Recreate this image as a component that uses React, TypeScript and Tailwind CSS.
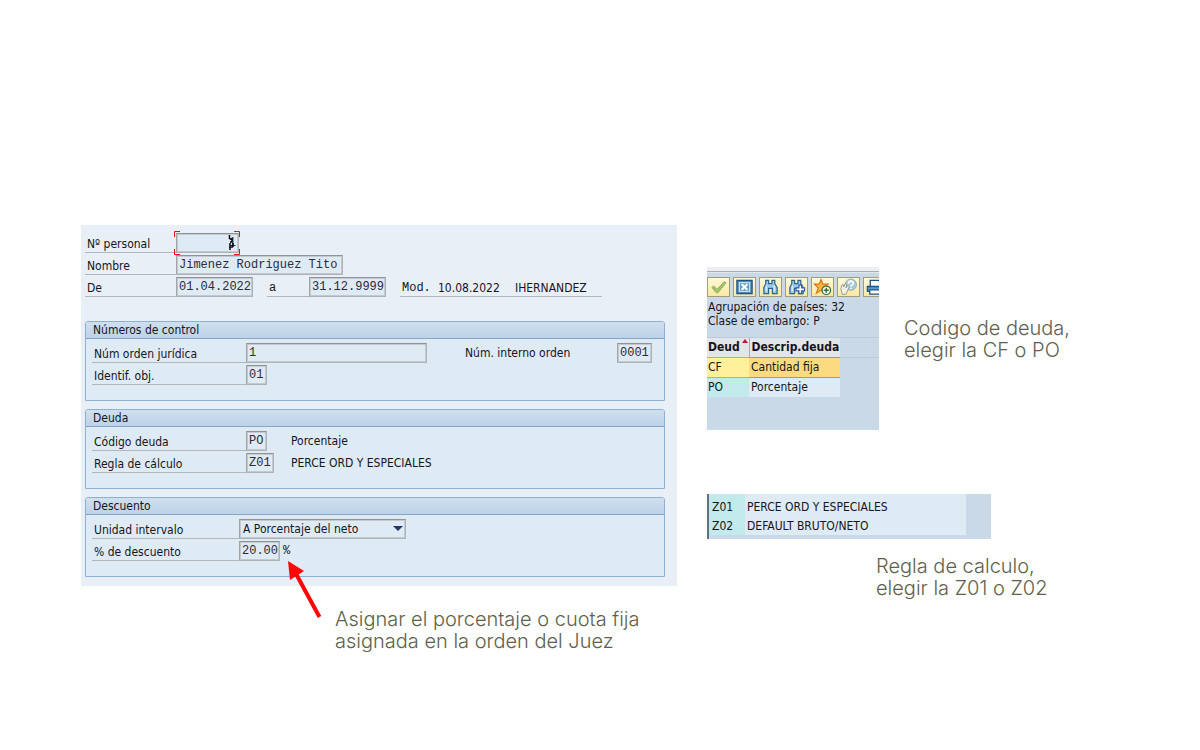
import type { ReactNode } from 'react';

const fieldBorder =
  'border border-t-[#8f9497] border-l-[#a2a6a9] border-r-[#aeb2b4] border-b-[#aeb2b4] shadow-[inset_0_0_0_1px_#c3c9ce]';

const fieldBase = `h-5 ${fieldBorder} bg-[#deeaf4] font-["Liberation_Mono",monospace] text-[12px] leading-[18px] text-[#2b2b3a] outline-none`;

const underline = 'h-5 border-b border-[#b4b7ba] leading-[22px]';

type FieldProps = { id: string; value: string; width: string };

function Field({ id, value, width }: FieldProps) {
  return <input id={id} defaultValue={value} className={`${fieldBase} ${width} shrink-0 pl-[2px]`} />;
}

function Group({ title, children }: { title: string; children: ReactNode }) {
  return (
    <section className="rounded-t-[3px] border border-[#8fb0d0] bg-[#deeaf4] pb-[15px]">
      <h2 className="h-[17px] rounded-t-[2px] border-b border-[#85a5c8] bg-linear-to-b from-[#cfdfee] to-[#bdd3e8] pl-[7px] leading-4">
        {title}
      </h2>
      <div className="flex flex-col gap-[2px] pt-1 pl-[6px]">{children}</div>
    </section>
  );
}

type RowProps = { htmlFor: string; label: string; width?: string; children: ReactNode };

function Row({ htmlFor, label, width = 'w-[154px]', children }: RowProps) {
  return (
    <div className="flex h-5 items-center">
      <label htmlFor={htmlFor} className={`${underline} ${width} shrink-0 pl-[2px]`}>
        {label}
      </label>
      {children}
    </div>
  );
}

function Binoculars() {
  return (
    <g fill="#9fcbe8" stroke="#2a648f" strokeWidth="1.3">
      <path d="M4.500 6V2.500h3V6H11V2.500h3V6l2.500 4v6.500h-5V11H7.500v5.500h-5V10z" />
      <path d="M5 8v6M13.500 8v6" stroke="#e6f4fc" strokeWidth="1.2" />
    </g>
  );
}

const tools: { name: string; icon: ReactNode }[] = [
  {
    name: 'Aceptar',
    icon: <path d="M2.500 10l2-1.500L8 12l7.500-8 2 1L9 15.500H7z" fill="#a3c468" stroke="#93ad64" />,
  },
  {
    name: 'Cancelar',
    icon: (
      <g>
        <rect x="1.500" y="2.500" width="16" height="14" fill="#4d8fbe" stroke="#1e5580" strokeWidth="1.4" />
        <rect x="4" y="5" width="11" height="9" fill="#5c9dca" stroke="#e9f5fc" />
        <path d="M6.500 6.500l6 6M12.500 6.500l-6 6" stroke="#fff" strokeWidth="2.2" />
      </g>
    ),
  },
  { name: 'Buscar', icon: <Binoculars /> },
  {
    name: 'Buscar siguiente',
    icon: (
      <g>
        <Binoculars />
        <path d="M12 7.500h3v3h3v3h-3v3h-3v-3H9v-3h3z" fill="#fff" stroke="#2c5fa8" strokeWidth="1.3" />
      </g>
    ),
  },
  {
    name: 'Favoritos',
    icon: (
      <g>
        <path d="M8 1.500l2 5h5.500l-4.500 4 1.500 5.500L8 13l-5 3 2-5.500-4-4h5z" fill="#f9b93c" stroke="#dc7117" strokeWidth="1.2" />
        <circle cx="13.500" cy="13" r="4.500" fill="#fff" stroke="#3f6f3c" strokeWidth="1.4" />
        <path d="M13.500 10.300v5.400M10.800 13h5.400" stroke="#2f7a35" strokeWidth="1.7" />
      </g>
    ),
  },
  {
    name: 'Ayuda',
    icon: (
      <g fill="none" stroke="#8f9a98">
        <circle cx="12" cy="7" r="6" fill="#a9cbdc" stroke="#93afb9" />
        <path d="M9.500 6c0-3.500 5-3.500 5-.5 0 2-2.500 1.500-2.500 3.500M12 10.200v1.400" stroke="#fff" strokeWidth="1.7" />
        <path d="M3 17.500l-1.500-6 1-4 1.200-1 .8 3 2-4 1.200 1-1 4 2.600-3 1.200 1L7 17z" fill="#f3f1e4" />
      </g>
    ),
  },
  {
    name: 'Imprimir',
    icon: (
      <g stroke="#1e5580" strokeWidth="1.4">
        <path d="M5 9V2.500h9L17 5v4" fill="#fff" />
        <path d="M2 9h16v5H2z" fill="#5b9cc8" />
        <path d="M4.500 12.500h11V17h-11z" fill="#fff" />
      </g>
    ),
  },
];

function CodePopup() {
  return (
    <section className="h-[163px] w-[172px] shrink-0 overflow-hidden bg-[#cad9e8]">
      <div className="h-1 bg-[#eceef0]" />
      <div className="mb-1 h-[2px] border-t border-[#a9adb1] bg-[#e2e7ec]" />
      <div className="flex gap-[3px]">
        {tools.map((tool) => (
          <button
            key={tool.name}
            type="button"
            aria-label={tool.name}
            className="flex h-5 w-[23px] shrink-0 items-center justify-center border border-[#a39c7b] bg-linear-to-b from-[#fff9d8] to-[#fbe8a2]"
          >
            <svg viewBox="0 0 19 19" className="h-[18px] w-[19px]" fill="none">
              {tool.icon}
            </svg>
          </button>
        ))}
      </div>
      <div className="mt-[3px] pb-[9px] pl-px leading-[14px]">
        <p>Agrupación de países: 32</p>
        <p>Clase de embargo: P</p>
      </div>
      <div className="relative border-t border-[#bccbdc]">
        <div className="pointer-events-none absolute top-[19px] right-0 w-[39px] border-t border-[#bccbdc]" />
        <table className="w-[133px] table-fixed border-collapse text-left">
          <thead>
            <tr className="h-[19px] bg-[#e3e6e9]">
              <th className="relative w-[42px] border-r border-[#a9adb1] p-0 pl-px leading-[19px]">
                Deud
                <svg viewBox="0 0 6 4" className="absolute top-px right-px h-1 w-[6px]">
                  <path d="M0 4L3 0l3 4z" fill="#c4122f" />
                </svg>
              </th>
              <th className="p-0 pl-[2px] leading-[19px]">Descrip.deuda</th>
            </tr>
          </thead>
          <tbody>
            <tr className="h-5 bg-[#fcda80]">
              <td className="border-y border-[#d9a566] bg-[#fff09c] p-0 pl-px leading-[19px]">CF</td>
              <td className="border-y border-[#dc8b3a] p-0 pl-[2px] leading-[19px]">Cantidad fija</td>
            </tr>
            <tr className="h-[19px] bg-[#deeaf4]">
              <td className="bg-[#c3eaea] p-0 pl-px leading-[19px]">PO</td>
              <td className="p-0 pl-[2px] leading-[19px]">Porcentaje</td>
            </tr>
          </tbody>
        </table>
      </div>
    </section>
  );
}

function RulePopup() {
  const rules = [
    ['Z01', 'PERCE ORD Y ESPECIALES'],
    ['Z02', 'DEFAULT BRUTO/NETO'],
  ];
  return (
    <section className="w-full max-w-[284px] border-l-2 border-[#5f7088] bg-[#cad9e8] pb-1">
      <table className="w-[257px] table-fixed border-collapse">
        <tbody>
          {rules.map(([code, text]) => (
            <tr key={code} className="h-[19px] bg-[#deeaf4] align-bottom first:h-[22px]">
              <td className="w-9 bg-[#c3eaea] p-0 pl-[3px] leading-[18px]">{code}</td>
              <td className="p-0 pl-[2px] leading-[18px]">{text}</td>
            </tr>
          ))}
        </tbody>
      </table>
    </section>
  );
}

const caption = 'font-["Inter",sans-serif] text-[20px] leading-[22px] font-light text-[#5f614d]';

export default function App() {
  return (
    <main className='grid grid-cols-[minmax(0,596px)_minmax(0,1fr)] items-start gap-[30px] bg-white pt-[225px] pl-[81px] font-["DejaVu_Sans_Condensed","Noto_Sans",sans-serif] text-[12px] text-[#15151d]'>
      <div className="relative">
        <form className="flex flex-col gap-2 bg-[#e8eff6] pt-2 pr-3 pb-[9px] pl-1">
          <div className="mb-4 flex flex-col gap-[2px]">
            <div className="flex h-5 items-center">
              <label htmlFor="personal" className={`${underline} w-[91px] pl-[2px]`}>
                Nº personal
              </label>
              <div className="relative">
                <input id="personal" defaultValue="1" className={`${fieldBase} block w-[63px] pr-[2px] text-right`} />
                <svg viewBox="0 0 67 24" className="pointer-events-none absolute -top-[2px] -left-[2px] h-6 w-[67px]" fill="none">
                  <path d="M.5 6V.5H6M60 .5h5.500V6M65.500 18v5.500H60M6 23.500H.5V18" stroke="#f00d0d" />
                  <path d="M55.500 4v4M56 8h2v3h-2M56 12v3M59 12v4M55 16h4M56 16v3" stroke="#090912" strokeWidth="1.500" />
                </svg>
              </div>
            </div>
            <Row htmlFor="nombre" label="Nombre" width="w-[91px]">
              <Field id="nombre" value="Jimenez Rodriguez Tito" width="w-[167px]" />
            </Row>
            <Row htmlFor="desde" label="De" width="w-[91px]">
              <Field id="desde" value="01.04.2022" width="w-[77px]" />
              <label htmlFor="hasta" className={`${underline} ml-[14px] w-[42px] pl-[2px] font-["Liberation_Mono",monospace]`}>
                a
              </label>
              <Field id="hasta" value="31.12.9999" width="w-[77px]" />
              <p className={`${underline} ml-[14px] flex w-[202px] pl-[2px]`}>
                <span className='w-9 font-["Liberation_Mono",monospace]'>Mod.</span>
                <span className="w-[77px]">10.08.2022</span>
                <span>IHERNANDEZ</span>
              </p>
            </Row>
          </div>
          <Group title="Números de control">
            <Row htmlFor="orden" label="Núm orden jurídica">
              <Field id="orden" value="1" width="w-[181px]" />
              <label htmlFor="interno" className="ml-[38px] w-[152px] leading-[22px]">
                Núm. interno orden
              </label>
              <Field id="interno" value="0001" width="w-[35px]" />
            </Row>
            <Row htmlFor="objeto" label="Identif. obj.">
              <Field id="objeto" value="01" width="w-[21px]" />
            </Row>
          </Group>
          <Group title="Deuda">
            <Row htmlFor="codigo" label="Código deuda">
              <Field id="codigo" value="PO" width="w-[21px]" />
              <span className="ml-6 leading-[22px]">Porcentaje</span>
            </Row>
            <Row htmlFor="regla" label="Regla de cálculo">
              <Field id="regla" value="Z01" width="w-7" />
              <span className="ml-[17px] leading-[22px]">PERCE ORD Y ESPECIALES</span>
            </Row>
          </Group>
          <Group title="Descuento">
            <Row htmlFor="unidad" label="Unidad intervalo" width="w-[147px]">
              <div className="relative">
                <select
                  id="unidad"
                  className={`block h-5 w-[167px] appearance-none ${fieldBorder} bg-[#deeaf4] pl-[3px] font-["DejaVu_Sans_Condensed","Noto_Sans",sans-serif] text-[12px] leading-[18px] outline-none`}
                >
                  <option>A Porcentaje del neto</option>
                </select>
                <svg viewBox="0 0 10 5" className="pointer-events-none absolute top-[7px] right-[3px] h-[5px] w-[10px]">
                  <path d="M0 0h10L5 5z" fill="#26376b" />
                </svg>
              </div>
            </Row>
            <Row htmlFor="porcentaje" label="% de descuento" width="w-[147px]">
              <Field id="porcentaje" value="20.00" width="w-[41px]" />
              <span className='ml-[3px] font-["Liberation_Mono",monospace] leading-[22px]'>%</span>
            </Row>
          </Group>
        </form>
        <svg viewBox="0 0 34 58" className="pointer-events-none absolute bottom-[33px] left-[207px] h-[58px] w-[34px]">
          <path d="M7 11L31.500 56" stroke="#fd0606" strokeWidth="4" />
          <path d="M0 0l16 10L2 19z" fill="#fd0606" />
        </svg>
        <p className={`${caption} mt-[22px] pl-[254px]`}>
          Asignar el porcentaje o cuota fija
          <br />
          asignada en la orden del Juez
        </p>
      </div>
      <div className="pt-[42px]">
        <div className="flex items-start gap-[25px]">
          <CodePopup />
          <p className={`${caption} pt-[50px]`}>
            Codigo de deuda,
            <br />
            elegir la CF o PO
          </p>
        </div>
        <div className="pt-16">
          <RulePopup />
          <p className={`${caption} pt-4 pl-[169px]`}>
            Regla de calculo,
            <br />
            elegir la Z01 o Z02
          </p>
        </div>
      </div>
    </main>
  );
}
